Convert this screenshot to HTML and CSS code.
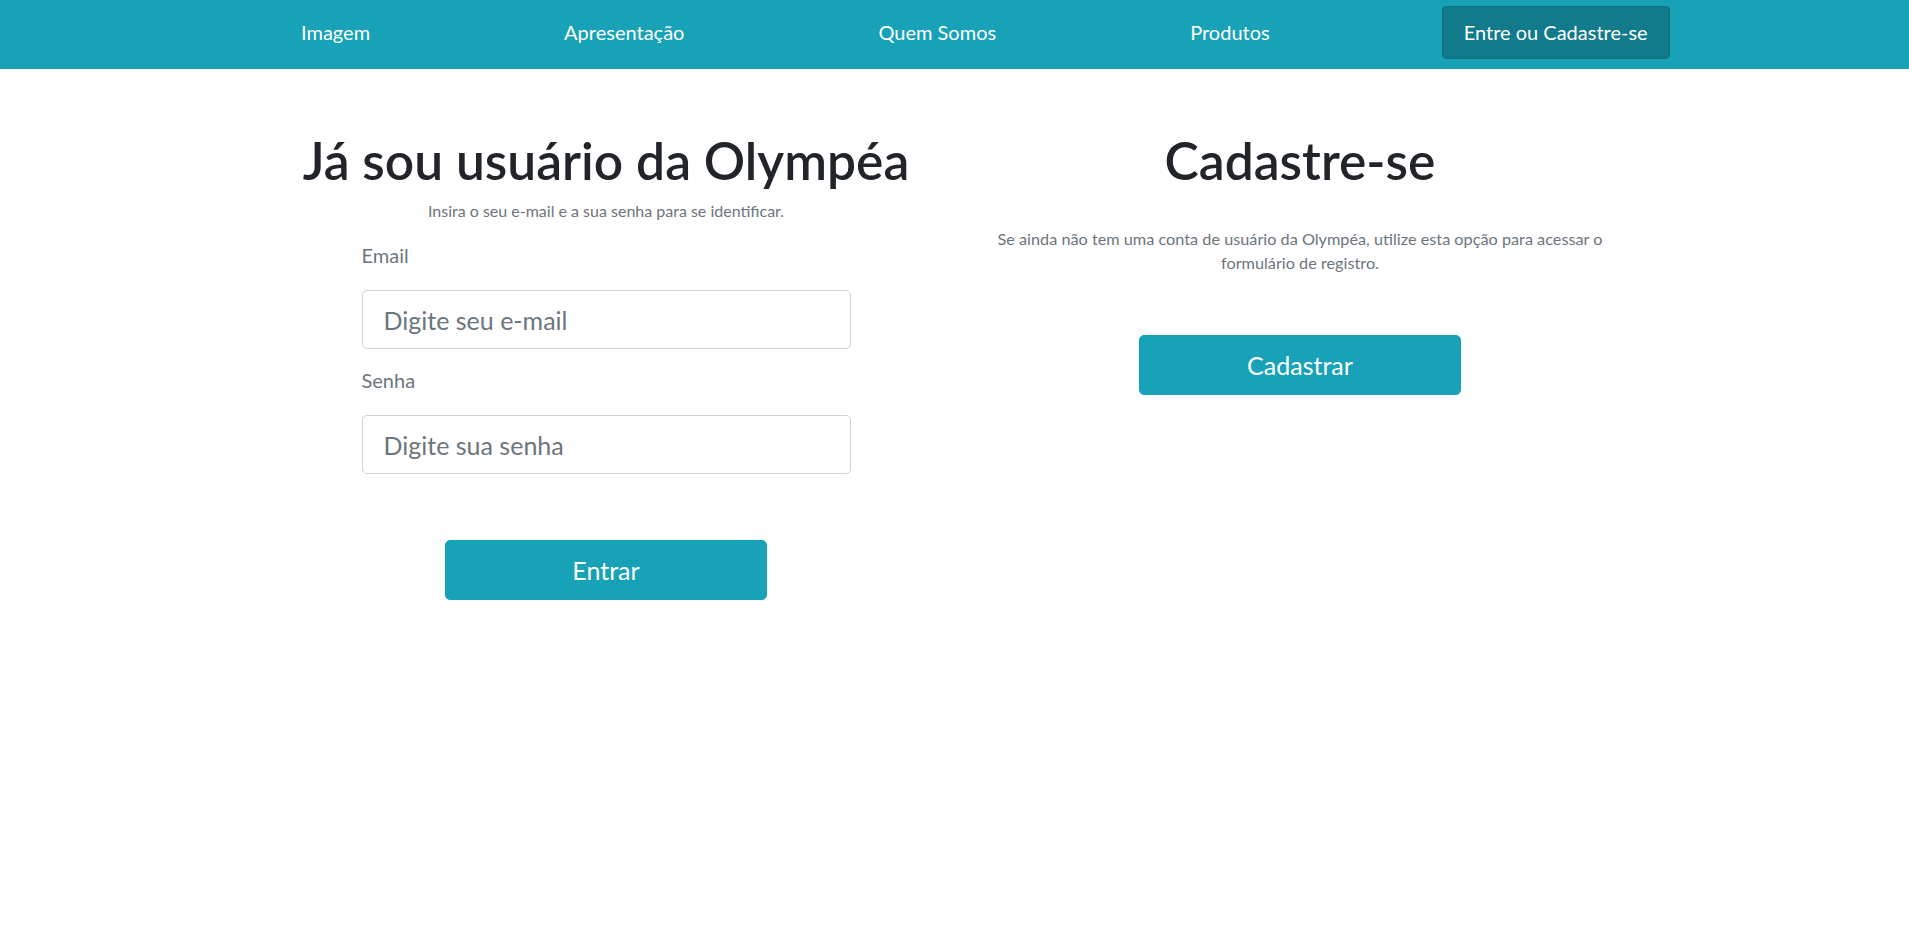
FILE: index.html
```html
<!DOCTYPE html>
<html lang="pt-BR">
<head>
<meta charset="utf-8">
<title>Olympéa - Entrar</title>
<link rel="stylesheet" href="styles.css">
</head>
<body>
<header class="navbar">
  <nav class="nav">
    <a class="nav-link" href="#">Imagem</a>
    <a class="nav-link" href="#">Apresentação</a>
    <a class="nav-link" href="#">Quem Somos</a>
    <a class="nav-link" href="#">Produtos</a>
    <a class="nav-btn" href="#">Entre ou Cadastre-se</a>
  </nav>
</header>
<main class="content">
  <section class="col">
    <h1 class="title">Já sou usuário da Olympéa</h1>
    <p class="subtitle">Insira o seu e-mail e a sua senha para se identificar.</p>
    <form class="form">
      <div class="group">
        <label class="label" for="email">Email</label>
        <input class="input" id="email" type="email" placeholder="Digite seu e-mail">
      </div>
      <div class="group">
        <label class="label" for="senha">Senha</label>
        <input class="input" id="senha" type="password" placeholder="Digite sua senha">
      </div>
      <button class="btn btn-entrar" type="button">Entrar</button>
    </form>
  </section>
  <section class="col">
    <h1 class="title">Cadastre-se</h1>
    <p class="text">Se ainda não tem uma conta de usuário da Olympéa, utilize esta opção para acessar o formulário de registro.</p>
    <button class="btn btn-cadastrar" type="button">Cadastrar</button>
  </section>
</main>
</body>
</html>
```
FILE: styles.css
```css
* { box-sizing: border-box; }
html, body { margin: 0; padding: 0; }
body {
  font-family: Lato, "Noto Sans", sans-serif;
  color: #212529;
  background: #fff;
}
.navbar {
  background: #17a2b8;
  height: 69px;
  padding-top: 6px;
}
.nav {
  display: flex;
  align-items: center;
  gap: 150px;
  padding-left: 279px;
}
.nav-link, .nav-btn {
  font-size: 20px;
  line-height: 31px;
  color: #fff;
  text-decoration: none;
  white-space: nowrap;
}
.nav-link {
  padding: 11px 22px;
}
.nav-btn {
  padding: 10px 21px;
  background: #117a8b;
  border: 1px solid #10707f;
  border-radius: 4px;
}
.content {
  display: grid;
  grid-template-columns: 694px 694px;
  justify-content: center;
  padding-top: 61px;
  padding-right: 3px;
}
.col {
  display: flex;
  flex-direction: column;
  align-items: center;
}
.title {
  margin: 0;
  font-size: 51.5px;
  line-height: 60px;
  font-weight: 600;
  color: #212529;
}
.subtitle {
  margin: 10px 0 0;
  font-size: 16px;
  line-height: 22px;
  color: #6c757d;
}
.form {
  width: 489px;
  margin-top: 18px;
  display: flex;
  flex-direction: column;
}
.group {
  display: flex;
  flex-direction: column;
  margin-bottom: 16px;
}
.label {
  font-size: 20px;
  line-height: 30px;
  color: #6c757d;
  margin-bottom: 20px;
}
.input {
  height: 59px;
  width: 100%;
  border: 1px solid #ced4da;
  border-radius: 5px;
  padding: 0 21px;
  font: inherit;
  font-size: 25px;
  color: #495057;
  background: #fff;
}
.input::placeholder { color: #6c757d; opacity: 1; }
.btn {
  width: 322px;
  height: 60px;
  border: 1px solid #17a2b8;
  border-radius: 5px;
  background: #17a2b8;
  color: #fff;
  font-family: inherit;
  font-size: 25px;
  cursor: pointer;
}
.btn-entrar {
  align-self: center;
  margin-top: 50px;
}
.text {
  margin: 37px 0 0;
  width: 630px;
  text-align: center;
  font-size: 16.25px;
  line-height: 24px;
  color: #6c757d;
}
.btn-cadastrar {
  margin-top: 60px;
}
```
